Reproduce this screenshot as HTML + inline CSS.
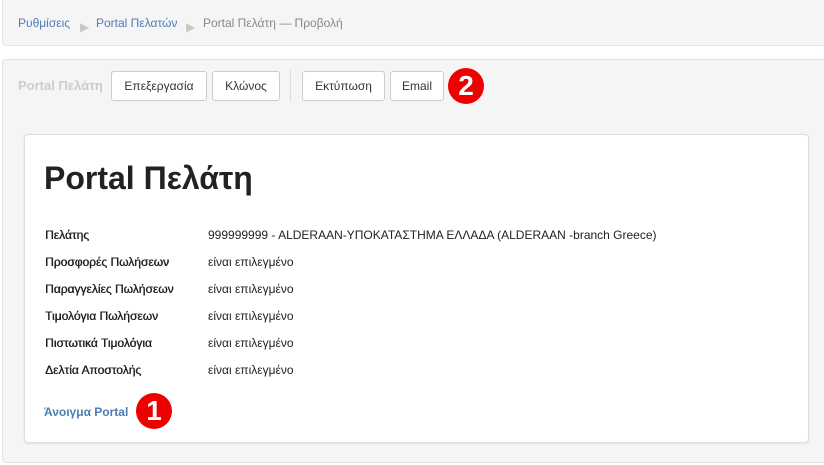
<!DOCTYPE html>
<html><head><meta charset="utf-8"><style>
body{margin:0;width:824px;height:465px;background:#fff;font-family:"Liberation Sans",Arial,sans-serif;font-size:12px;color:#333;position:relative;overflow:hidden}
.bc{position:absolute;left:2px;top:-2px;width:830px;height:48px;background:#f5f5f5;border:1px solid #e3e3e3;border-radius:4px;box-sizing:border-box}
.bc span{position:absolute;top:17px;font-size:12px}
a{color:#4a7eb5;text-decoration:none}
.tri{color:#c8c8c8;font-size:6px;top:21px!important}
.tb{position:absolute;left:2px;top:59px;width:830px;height:404px;background:#f5f5f5;border:1px solid #e3e3e3;border-radius:4px;box-sizing:border-box}
.btn{position:absolute;top:71px;height:30px;border:1px solid #ccc;background:#fff;border-radius:3px;box-sizing:border-box;font-size:12px;color:#333;text-align:center;line-height:28px}
.card{position:absolute;left:24px;top:134px;width:785px;height:309px;background:#fff;border:1px solid #ddd;border-radius:4px;box-sizing:border-box;box-shadow:0 1px 2px rgba(0,0,0,.08)}
.r{position:absolute;font-size:12px;color:#222}
.l{text-shadow:0.4px 0 0 #222}
.c{position:absolute;width:36px;height:36px;border-radius:50%;background:#e00;color:#fff;font-weight:bold;font-size:28px;text-align:center;line-height:36px}
</style></head><body>
<div class="bc">
<span style="left:15px"><a>Ρυθμίσεις</a></span>
<span class="tri" style="left:77px">▶</span>
<span style="left:93px"><a>Portal Πελατών</a></span>
<span class="tri" style="left:183px">▶</span>
<span style="left:200px;color:#888">Portal Πελάτη — Προβολή</span>
</div>
<div class="tb"></div>
<div style="position:absolute;left:18px;top:78px;font-weight:bold;color:#ccc;font-size:13px">Portal Πελάτη</div>
<div class="btn" style="left:111px;width:96px">Επεξεργασία</div>
<div class="btn" style="left:212px;width:68px">Κλώνος</div>
<div style="position:absolute;left:290px;top:70px;width:1px;height:32px;background:#ddd"></div>
<div class="btn" style="left:302px;width:83px">Εκτύπωση</div>
<div class="btn" style="left:390px;width:54px">Email</div>
<div class="c" style="left:448px;top:68px">2</div>
<div class="card"></div>
<div style="position:absolute;left:44px;top:160px;font-size:32px;font-weight:bold;color:#222">Portal Πελάτη</div>
<div class="r l" style="left:45px;top:228px">Πελάτης</div><div class="r" style="left:208px;top:228px">999999999 - ALDERAAN-ΥΠΟΚΑΤΑΣΤΗΜΑ ΕΛΛΑΔΑ (ALDERAAN -branch Greece)</div>
<div class="r l" style="left:45px;top:255px">Προσφορές Πωλήσεων</div><div class="r" style="left:208px;top:255px">είναι επιλεγμένο</div>
<div class="r l" style="left:45px;top:282px">Παραγγελίες Πωλήσεων</div><div class="r" style="left:208px;top:282px">είναι επιλεγμένο</div>
<div class="r l" style="left:45px;top:309px">Τιμολόγια Πωλήσεων</div><div class="r" style="left:208px;top:309px">είναι επιλεγμένο</div>
<div class="r l" style="left:45px;top:336px">Πιστωτικά Τιμολόγια</div><div class="r" style="left:208px;top:336px">είναι επιλεγμένο</div>
<div class="r l" style="left:45px;top:363px">Δελτία Αποστολής</div><div class="r" style="left:208px;top:363px">είναι επιλεγμένο</div>
<div style="position:absolute;left:44px;top:405px;font-weight:bold;font-size:12px"><a>Άνοιγμα Portal</a></div>
<div class="c" style="left:136px;top:393px">1</div>
</body></html>
